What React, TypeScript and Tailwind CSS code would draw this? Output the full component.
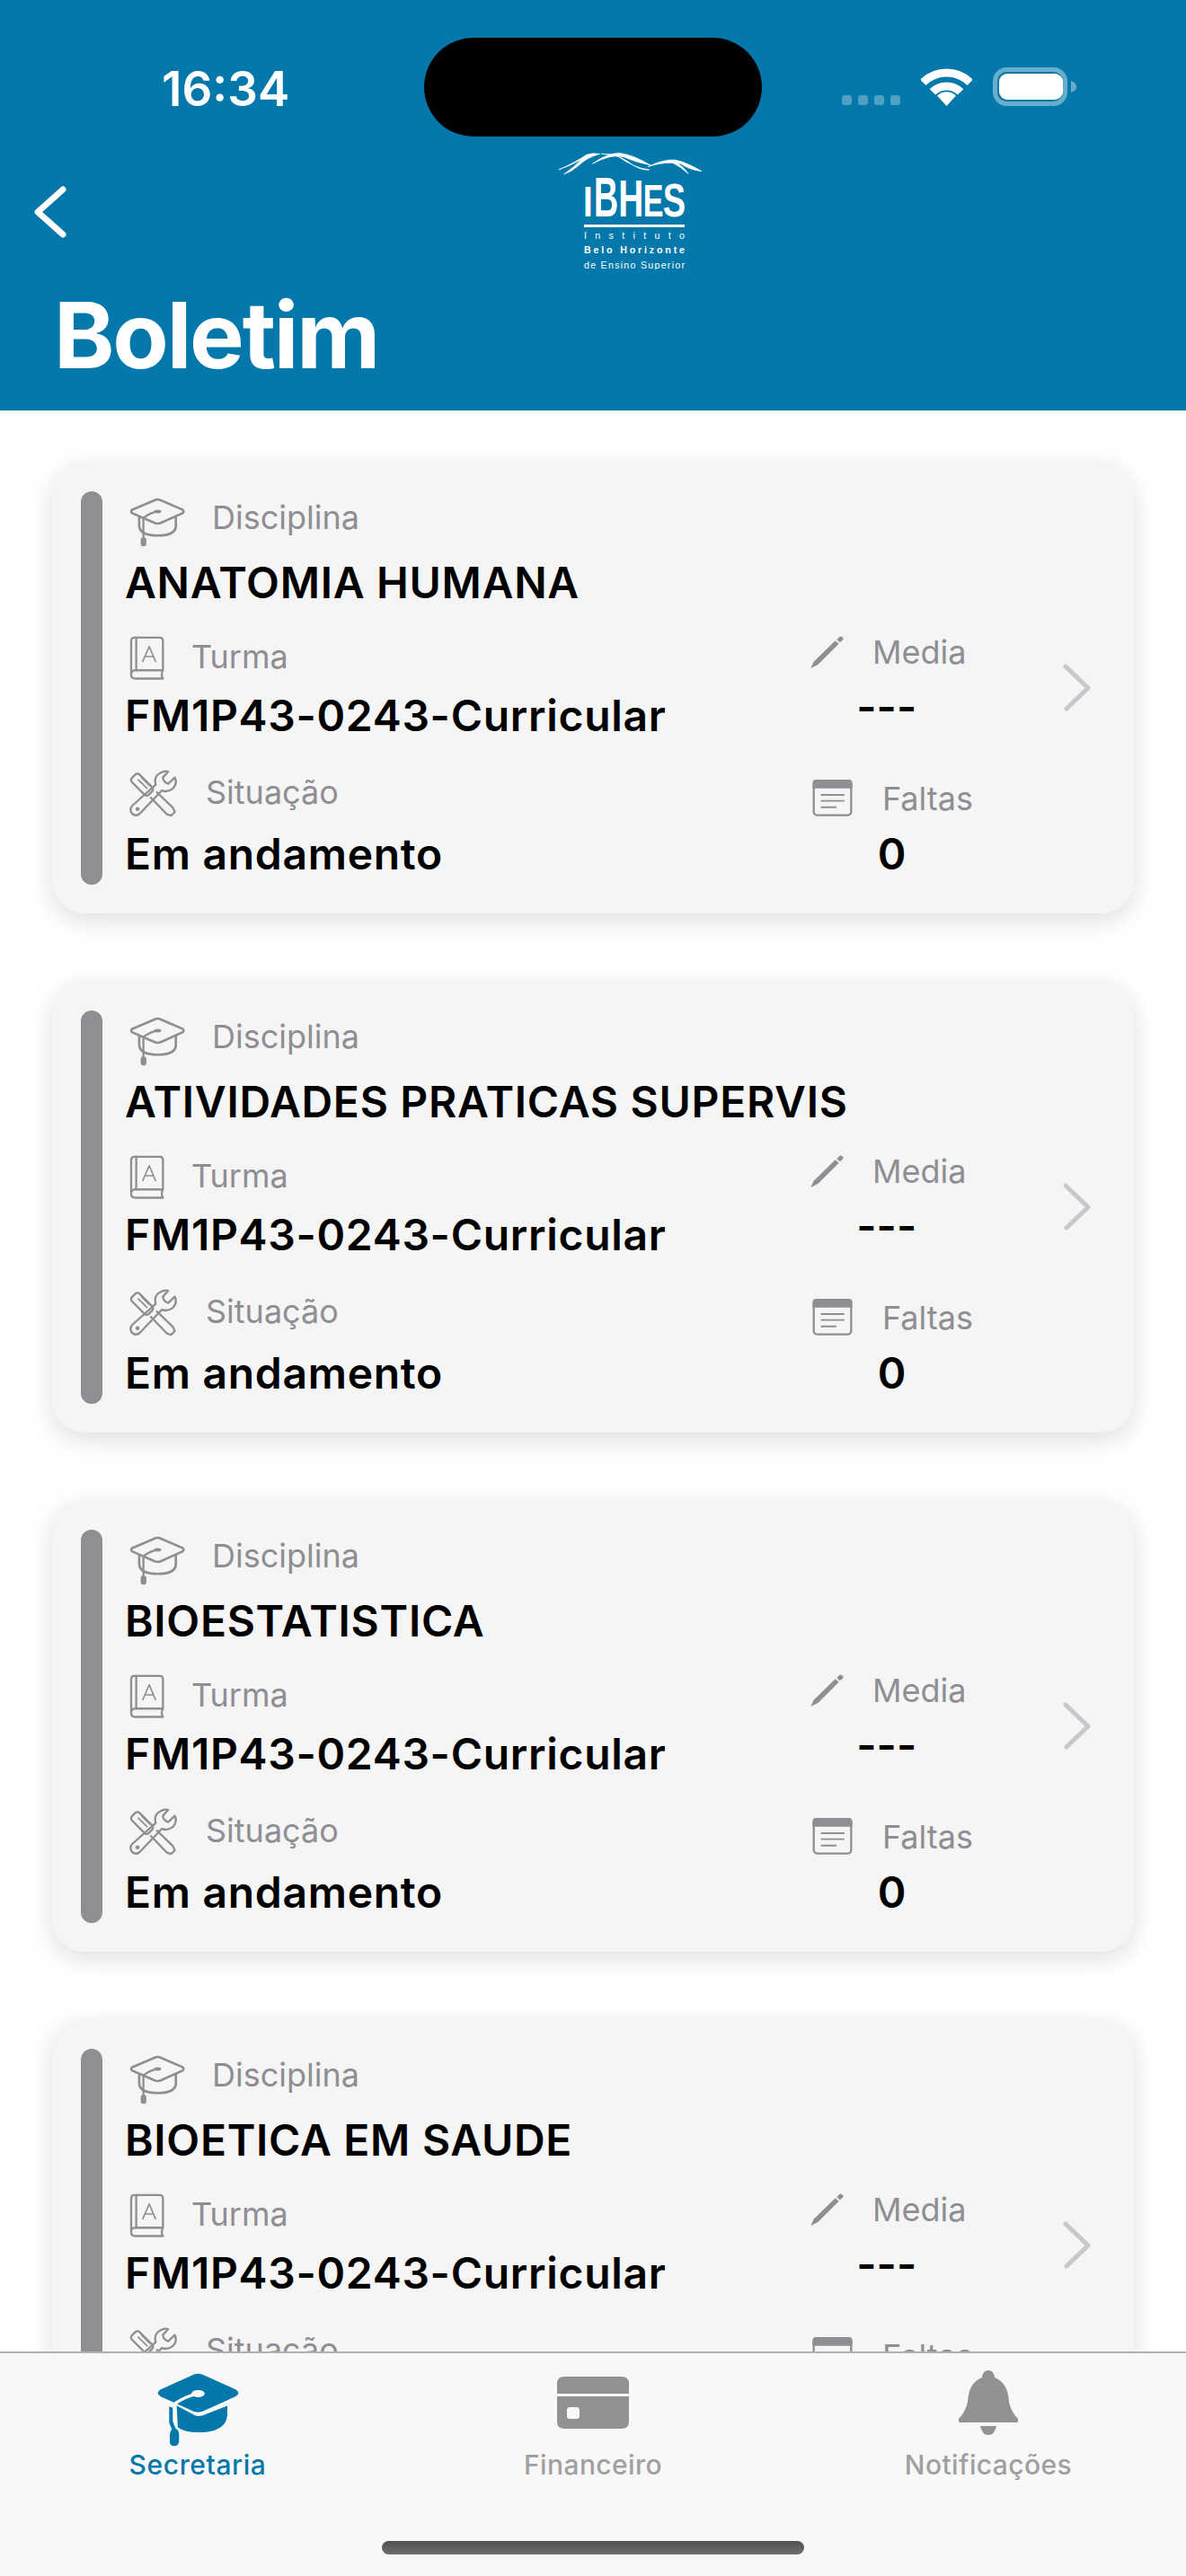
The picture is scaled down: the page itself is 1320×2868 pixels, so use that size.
const courses = [
  "ANATOMIA HUMANA",
  "ATIVIDADES PRATICAS SUPERVIS",
  "BIOESTATISTICA",
  "BIOETICA EM SAUDE",
];

function CapIcon() {
  return (
    <svg width="63" height="55" viewBox="70 70 190 165" fill="none" stroke="#8e8e93" strokeWidth="8" strokeLinecap="round" strokeLinejoin="round" className="shrink-0">
      <path d="M158 77 L80 110 Q72 116 80 122 L155 155 Q165 159 175 155 L248 122 Q256 116 248 110 L172 77 Q165 74 158 77Z" />
      <path d="M103 135 V165 Q105 197 165 197 Q225 197 226 165 V135" />
      <path d="M165 116 Q140 120 117 138 V205" strokeWidth="7" />
      <ellipse cx="165" cy="116" rx="12" ry="6" fill="#8e8e93" stroke="none" />
      <rect x="108" y="203" width="19" height="30" rx="8" fill="#8e8e93" stroke="none" />
    </svg>
  );
}

function BookIcon() {
  return (
    <svg width="39" height="50" viewBox="70 50 118 150" fill="none" stroke="#8e8e93" strokeWidth="7" strokeLinecap="round" strokeLinejoin="round" className="shrink-0">
      <path d="M76 180 V66 Q76 55 87 55 H172 Q183 55 183 66 V165 H90 Q76 166 76 180 Q76 193 90 193 H183 Q175 180 183 165" />
      <path d="M93 55 V165" />
      <path d="M115 135 L137 85 L158 135 M122 119 H151" strokeWidth="5" />
    </svg>
  );
}

function ToolsIcon() {
  return (
    <svg width="54" height="53" viewBox="70 498 162 160" fill="none" stroke="#8e8e93" strokeWidth="7" strokeLinejoin="round" className="shrink-0">
      <rect x="-18" y="-40" width="36" height="80" rx="10" transform="translate(112 548) rotate(-45)" />
      <path d="M98 530 L130 562 M110 524 L138 552" strokeWidth="5" />
      <path d="M140 590 L196 648 L210 652 L222 640 L216 626 L160 572" />
      <path d="M158 548 Q150 520 175 508 Q188 500 200 504 L182 524 Q184 540 200 545 L222 524 Q232 545 215 562 Q198 575 178 568 L105 645 Q92 658 78 645 Q68 630 80 618 Z" />
      <circle cx="97" cy="630" r="7" fill="#8e8e93" stroke="none" />
    </svg>
  );
}

function PencilIcon() {
  return (
    <svg width="38" height="36" viewBox="68 84 112 108" fill="#8e8e93" className="shrink-0">
      <path d="M68 192 L78 170 L150 100 L162 110 L92 180 Z" />
      <path d="M155 96 L165 86 Q170 84 176 90 Q178 95 174 99 L165 106Z" />
    </svg>
  );
}

function NoteIcon() {
  return (
    <svg width="45" height="41" viewBox="72 565 135 125" fill="none" stroke="#8e8e93" className="shrink-0">
      <rect x="76" y="569" width="127" height="117" rx="12" strokeWidth="7" />
      <path d="M72 595 V577 Q72 565 84 565 H195 Q207 565 207 577 V595 Z" fill="#8e8e93" stroke="none" />
      <path d="M100 617 H180 M100 637 H180 M100 659 H153" strokeWidth="6" />
    </svg>
  );
}

function Card({ title }: { title: string }) {
  return (
    <div className="flex items-center shrink-0 h-[503px] pl-[32px] bg-[#f5f5f5] rounded-[36px] shadow-[0_8px_28px_rgba(0,0,0,0.13)]">
      <div className="w-[24px] h-[438px] shrink-0 rounded-full bg-[#8e8e93]" />

      <div className="flex flex-col w-[763px] ml-[25px] self-start pt-[40px]">
        <div className="flex items-start pl-[5px] gap-[29px] h-[54px]">
          <CapIcon />
          <span className="text-[36px] leading-[36px] text-[#8e8e93] mt-[4px]">Disciplina</span>
        </div>
        <p className="text-[48px] leading-[58px] font-semibold tracking-[0.7px] text-black mt-[12px] whitespace-nowrap">{title}</p>

        <div className="flex items-start pl-[5px] gap-[30px] h-[48px] mt-[30px]">
          <BookIcon />
          <span className="text-[36px] leading-[36px] text-[#8e8e93] mt-[5px]">Turma</span>
        </div>
        <p className="text-[48px] leading-[58px] font-semibold tracking-[0.7px] text-black mt-[12px] whitespace-nowrap">FM1P43-0243-Curricular</p>

        <div className="flex items-start pl-[5px] gap-[31px] h-[52px] mt-[31px]">
          <ToolsIcon />
          <span className="text-[36px] leading-[36px] text-[#8e8e93] mt-[7px]">Situação</span>
        </div>
        <p className="text-[48px] leading-[58px] font-semibold tracking-[0.7px] text-black mt-[13px] whitespace-nowrap">Em andamento</p>
      </div>

      <div className="flex flex-col items-start w-[281px] self-start pt-[194px]">
        <div className="flex flex-col items-center">
          <div className="flex items-start gap-[31px] h-[36px]">
            <PencilIcon />
            <span className="text-[36px] leading-[36px] text-[#8e8e93]">Media</span>
          </div>
          <p className="text-[48px] leading-[58px] font-semibold text-black mt-[14px] mr-[4px]">---</p>
        </div>
        <div className="flex flex-col items-center ml-[2px] mt-[52px]">
          <div className="flex items-start gap-[33px] h-[41px]">
            <NoteIcon />
            <span className="text-[36px] leading-[36px] text-[#8e8e93] mt-[3px]">Faltas</span>
          </div>
          <p className="text-[48px] leading-[58px] font-semibold text-black mt-[13px] mr-[2px]">0</p>
        </div>
      </div>

      <svg width="31" height="53" viewBox="0 0 31 53" fill="none" stroke="#c7c7cc" strokeWidth="5" strokeLinecap="round" strokeLinejoin="round" className="shrink-0">
        <path d="M3 3 L28 27 L4 50" />
      </svg>
    </div>
  );
}

function Logo() {
  return (
    <svg width="160" height="130" viewBox="120 58 480 390" fill="#ffffff" className="shrink-0 font-['Liberation_Sans',sans-serif]">
      <g stroke="#ffffff" strokeWidth="2">
        <path d="M122 115 Q180 90 215 65 Q235 58 260 62 Q215 75 190 100 Q165 122 140 130 Q175 105 200 80 Q165 100 122 115Z" />
        <path d="M235 95 Q290 55 330 60 Q370 65 430 100 Q380 90 340 72 Q300 60 235 95Z" />
        <path d="M265 62 Q310 60 350 85 Q395 120 425 115 Q375 110 320 70 Q295 62 265 62Z" />
        <path d="M420 105 Q470 80 510 82 Q550 90 600 120 Q560 115 530 95 Q480 85 420 105Z" />
        <path d="M490 85 Q530 90 555 128 Q530 105 500 90Z" />
      </g>
      <text x="204" y="272" textLength="32" lengthAdjust="spacingAndGlyphs" fontWeight="700" fontSize="142">I</text>
      <text x="240" y="272" textLength="82" lengthAdjust="spacingAndGlyphs" fontWeight="700" fontSize="190">B</text>
      <text x="322" y="272" textLength="84" lengthAdjust="spacingAndGlyphs" fontWeight="700" fontSize="170">H</text>
      <text x="404" y="272" textLength="68" lengthAdjust="spacingAndGlyphs" fontWeight="700" fontSize="150">E</text>
      <text x="470" y="272" textLength="76" lengthAdjust="spacingAndGlyphs" fontWeight="700" fontSize="158">S</text>
      <rect x="207" y="298" width="336" height="9" />
      <text x="207" y="347" textLength="336" fontSize="32">Instituto</text>
      <text x="207" y="395" textLength="336" fontSize="32" fontWeight="700">Belo Horizonte</text>
      <text x="207" y="445" textLength="336" fontSize="32">de Ensino Superior</text>
    </svg>
  );
}

function StatusIcons() {
  return (
    <div className="flex items-end ml-[89px] mt-[33px]">
      <div className="flex gap-[7px] mb-[1px]">
        <div className="w-[11px] h-[11px] rounded-[3px] bg-white/30" />
        <div className="w-[11px] h-[11px] rounded-[3px] bg-white/30" />
        <div className="w-[11px] h-[11px] rounded-[3px] bg-white/30" />
        <div className="w-[11px] h-[11px] rounded-[3px] bg-white/30" />
      </div>
      <svg width="57" height="42" viewBox="0 0 57 42" fill="none" stroke="#ffffff" strokeWidth="9" className="ml-[23px]">
        <path d="M2.3 15.8 A37 37 0 0 1 54.7 15.8" />
        <path d="M12.9 26.4 A22 22 0 0 1 44.1 26.4" />
        <path d="M28.5 42 L18 30.5 A15 15 0 0 1 39 30.5 Z" fill="#ffffff" stroke="none" />
      </svg>
      <svg width="93" height="43" viewBox="0 0 93 43" className="ml-[23px]">
        <rect x="2.5" y="2.5" width="78" height="38" rx="13" fill="none" stroke="#ffffff" strokeOpacity="0.4" strokeWidth="5" />
        <rect x="7" y="7" width="71" height="29" rx="9" fill="#ffffff" />
        <path d="M87 15 Q93 17 93 21.5 Q93 26 87 28 Z" fill="#ffffff" fillOpacity="0.4" />
      </svg>
    </div>
  );
}

function TabBar() {
  return (
    <div className="relative flex shrink-0 h-[250px] bg-[#f8f8f8] border-t-[2px] border-[#b0b0b0]">
      <div className="flex flex-col items-center w-[440px] pt-[21px]">
        <svg width="93" height="83" viewBox="160 60 280 250">
          <path d="M285 68 Q300 62 315 68 L425 118 Q445 130 425 142 L315 192 Q300 197 285 192 L175 142 Q155 130 175 118 Z" fill="#0478aa" />
          <path d="M300 132 Q260 140 218 168" fill="none" stroke="#f8f8f8" strokeWidth="10" />
          <ellipse cx="300" cy="132" rx="22" ry="12" fill="#f8f8f8" />
          <path d="M228 172 L290 205 Q300 210 315 205 L398 173 V205 Q392 262 300 262 Q255 262 232 245 Z" fill="#0478aa" />
          <path d="M203 175 L215 180 V225 L225 250 Q236 254 236 270 V295 Q232 308 220 308 Q206 308 205 295 V270 Q205 258 212 252 L203 230 Z" fill="#0478aa" />
        </svg>
        <span className="text-[30px] leading-[36px] font-medium tracking-[0.6px] text-[#0478aa] mt-[2px]">Secretaria</span>
      </div>
      <div className="flex flex-col items-center w-[440px] pt-[26px]">
        <svg width="80" height="58" viewBox="0 0 80 58" fill="#929292">
          <path d="M0 19 V8 Q0 0 8 0 H72 Q80 0 80 8 V19 Z" />
          <path fillRule="evenodd" d="M0 22 H80 V50 Q80 58 72 58 H8 Q0 58 0 50 Z M14 34 Q11 34 11 37 V44 Q11 47 14 47 H22 Q25 47 25 44 V37 Q25 34 22 34 Z" />
        </svg>
        <span className="text-[30px] leading-[36px] font-medium tracking-[0.4px] text-[#a0a0a0] mt-[22px]">Financeiro</span>
      </div>
      <div className="flex flex-col items-center w-[440px] pt-[19px]">
        <svg width="66" height="72" viewBox="0 0 66 72" fill="#929292">
          <path d="M33 0 Q39 0 40 8 Q55 14 56 35 Q58 46 66 54 V57 Q66 58 64 58 H2 Q0 58 0 57 V54 Q8 46 10 35 Q11 14 26 8 Q27 0 33 0Z" />
          <path d="M24 62 H42 Q40 72 33 72 Q26 72 24 62Z" />
        </svg>
        <span className="text-[30px] leading-[36px] font-medium tracking-[0.4px] text-[#a0a0a0] mt-[15px]">Notificações</span>
      </div>
      {/* Home indicator */}
      <div className="absolute left-[425px] bottom-[24px] w-[470px] h-[15px] rounded-full bg-gradient-to-b from-[#505050] to-[#6e6e6e]" />
    </div>
  );
}

export default function App() {
  return (
    <div className="flex flex-col w-[1320px] h-[2868px] overflow-hidden bg-white font-[Inter,sans-serif]">
      <div className="flex flex-col shrink-0 h-[457px] bg-[#0478aa] text-white">
        <div className="flex items-start pt-[42px] h-[152px]">
          <span className="w-[292px] ml-[180px] mt-[31px] text-[53px] leading-[53px] font-semibold">16:34</span>
          <div className="w-[376px] h-[110px] rounded-full bg-black shrink-0" />
          <StatusIcons />
        </div>
        <div className="flex items-start mt-[18px] pl-[38px]">
          <svg width="36" height="58" viewBox="0 0 36 58" fill="none" stroke="#ffffff" strokeWidth="7" strokeLinecap="round" strokeLinejoin="round" className="mt-[37px] shrink-0">
            <path d="M32 4 L4 29 L32 54" />
          </svg>
          <div className="ml-[547px]">
            <Logo />
          </div>
        </div>
        <h1 className="pl-[60px] mt-[22px] text-[102px] leading-[102px] font-bold tracking-[-2.2px]">Boletim</h1>
      </div>

      <div className="flex flex-col flex-1 min-h-0 overflow-hidden gap-[75px] pt-[57px] px-[58px]">
        {courses.map((c) => (
          <Card key={c} title={c} />
        ))}
      </div>

      <TabBar />
    </div>
  );
}
